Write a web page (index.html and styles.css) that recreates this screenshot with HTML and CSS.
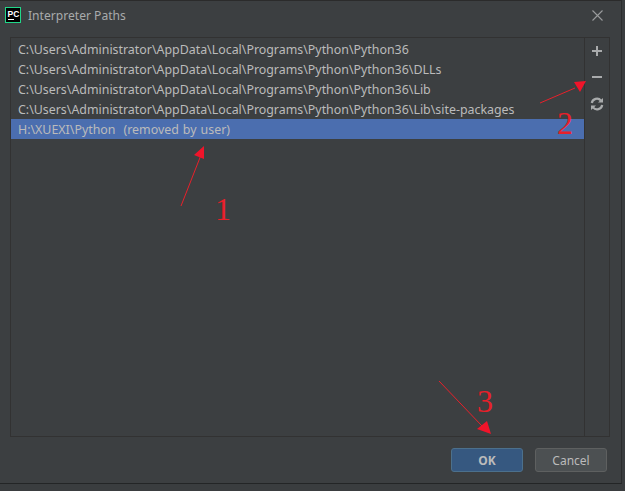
FILE: index.html
```html
<!DOCTYPE html>
<html lang="en">
<head>
<meta charset="utf-8">
<title>Interpreter Paths</title>
<link rel="stylesheet" href="styles.css">
</head>
<body>
<div class="dialog">
  <header class="titlebar">
    <svg class="logo" width="16" height="16" viewBox="0 0 16 16">
      <rect x="0.5" y="0.5" width="15" height="15" fill="#000" stroke="#21d789"/>
      <rect x="3" y="12" width="6" height="1" fill="#fff"/>
      <text x="2.5" y="9.5" class="logo-text">PC</text>
    </svg>
    <span class="title">Interpreter Paths</span>
    <svg class="close" width="11" height="11" viewBox="0 0 11 11">
      <path d="M0.5 0.5L10.5 10.5M10.5 0.5L0.5 10.5" stroke="#9a9c9d" stroke-width="1.1" fill="none"/>
    </svg>
  </header>
  <main class="panel">
    <ul class="paths">
      <li>C:\Users\Administrator\AppData\Local\Programs\Python\Python36</li>
      <li>C:\Users\Administrator\AppData\Local\Programs\Python\Python36\DLLs</li>
      <li>C:\Users\Administrator\AppData\Local\Programs\Python\Python36\Lib</li>
      <li>C:\Users\Administrator\AppData\Local\Programs\Python\Python36\Lib\site-packages</li>
      <li class="selected">H:\XUEXI\Python&nbsp; (removed by user)</li>
    </ul>
    <aside class="tools">
      <svg width="12" height="12" viewBox="0 0 12 12"><path d="M1 6H11M6 1V11" stroke="#a9abac" stroke-width="2" fill="none"/></svg>
      <svg width="12" height="12" viewBox="0 0 12 12"><path d="M1 6H11" stroke="#a9abac" stroke-width="2" fill="none"/></svg>
      <svg width="14" height="14" viewBox="0 0 14 14">
        <path d="M1.8 6A5.2 5 0 0 1 11 3.6M12.2 8A5.2 5 0 0 1 3 10.4" stroke="#a9abac" stroke-width="2.2" fill="none"/>
        <path d="M8 5.6H13V1ZM6 8.4H1V13Z" fill="#a9abac"/>
      </svg>
    </aside>
  </main>
  <footer class="buttons">
    <button class="btn primary">OK</button>
    <button class="btn">Cancel</button>
  </footer>
</div>
<div class="taskbar"></div>
<svg class="annotations" width="625" height="491" viewBox="0 0 625 491">
  <path d="M181 206L201 155M540 103L575 88M439 381L482 426" stroke="#e8202a" stroke-width="1" fill="none"/>
  <path d="M204 146L194 155L204 159ZM586 81L574 82L580 92ZM491 434L477 429L487 421Z" fill="#f0142a"/>
</svg>
<span class="mark mark1">1</span>
<span class="mark mark2">2</span>
<span class="mark mark3">3</span>
</body>
</html>
```
FILE: styles.css
```css
* { box-sizing: border-box; }
html, body { margin: 0; padding: 0; }
body {
  width: 625px;
  height: 491px;
  background: #3a3d3f;
  overflow: hidden;
  font-family: "Noto Sans", sans-serif;
  font-size: 12px;
  color: #bbbbbb;
  position: relative;
}
.dialog {
  width: 622px;
  height: 484px;
  background: #3c3f41;
  border-top: 1px solid #2b2b2b;
  border-right: 1px solid #2b2d2e;
  border-bottom: 1px solid #232526;
  display: flex;
  flex-direction: column;
}
.titlebar {
  height: 36px;
  flex: none;
  display: flex;
  align-items: center;
  padding: 0 18px 8px 5px;
}
.logo { flex: none; }
.logo-text { font: bold 8.5px "Liberation Sans", sans-serif; fill: #fff; }
.title { margin-left: 7px; color: #a9abac; flex: 1; font-size: 12.1px; }
.close { flex: none; }
.panel {
  margin: 0 11px 0 10px;
  height: 400px;
  flex: none;
  border: 1px solid #323232;
  display: flex;
}
.paths {
  list-style: none;
  margin: 0;
  padding: 1px 0 0;
  width: 573px;
  flex: none;
}
.paths li {
  height: 20px;
  line-height: 21px;
  padding-left: 7px;
  color: #bbbbbb;
  font-size: 12.4px;
  white-space: nowrap;
}
.paths li.selected { background: #4b6eaf; word-spacing: 0.8px; }
.tools {
  flex: 1;
  border-left: 1px solid #323232;
  display: flex;
  flex-direction: column;
  align-items: center;
  gap: 14px;
  padding-top: 7px;
}
.buttons {
  display: flex;
  justify-content: flex-end;
  gap: 12px;
  padding: 11px 14px 0 0;
}
.btn {
  width: 72px;
  height: 24px;
  padding: 0;
  border-radius: 3px;
  border: 1px solid #5e6060;
  background: #4c5052;
  color: #bbbbbb;
  font: 12px "Noto Sans", sans-serif;
}
.btn.primary {
  background: #365880;
  border-color: #4c708c;
  font-weight: 700;
}
.annotations { position: absolute; left: 0; top: 0; pointer-events: none; }
.mark {
  position: absolute;
  font-family: "Liberation Serif", serif;
  font-size: 32px;
  line-height: 32px;
  color: #e8202a;
}
.mark1 { left: 215px; top: 193px; }
.mark2 { left: 557px; top: 107px; }
.mark3 { left: 477px; top: 385px; }
```
